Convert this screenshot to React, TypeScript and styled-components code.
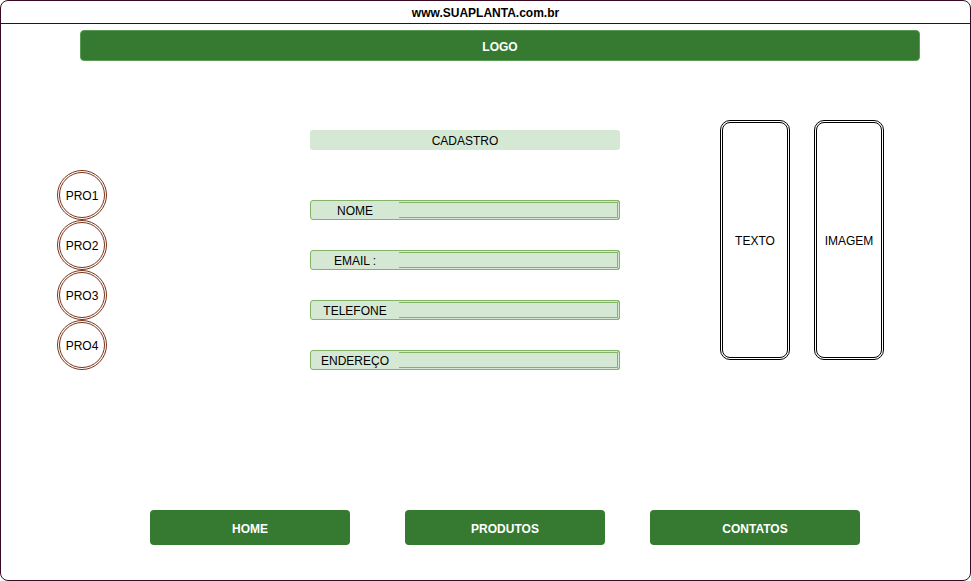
import { createGlobalStyle, styled } from 'styled-components';

const GlobalStyle = createGlobalStyle`
  html, body {
    margin: 0;
    padding: 0;
    background: #ffffff;
  }
  * {
    box-sizing: border-box;
  }
`;

const fields = ['NOME', 'EMAIL :', 'TELEFONE', 'ENDEREÇO'];
const products = ['PRO1', 'PRO2', 'PRO3', 'PRO4'];

export default function App() {
  return (
    <>
      <GlobalStyle />
      <Frame>
        <TitleBar>www.SUAPLANTA.com.br</TitleBar>
        <LogoBar>LOGO</LogoBar>
        <Middle>
          <ProductColumn>
            {products.map((p) => (
              <ProductCircle key={p}>{p}</ProductCircle>
            ))}
          </ProductColumn>
          <FormColumn>
            <FormTitle>CADASTRO</FormTitle>
            <Fields>
              {fields.map((f) => (
                <Field key={f}>
                  <FieldLabel>{f}</FieldLabel>
                  <FieldInput />
                </Field>
              ))}
            </Fields>
          </FormColumn>
          <PanelColumn>
            <Panel>TEXTO</Panel>
            <Panel>IMAGEM</Panel>
          </PanelColumn>
        </Middle>
        <Nav>
          <NavButton $offset={149} $width={200}>HOME</NavButton>
          <NavButton $offset={55} $width={200}>PRODUTOS</NavButton>
          <NavButton $offset={45} $width={210}>CONTATOS</NavButton>
        </Nav>
      </Frame>
    </>
  );
}

const Frame = styled.div`
  width: 971px;
  height: 581px;
  border: 1px solid #3a0a24;
  border-radius: 8px;
  display: flex;
  flex-direction: column;
  font-family: 'Liberation Sans', Arial, sans-serif;
  font-size: 12px;
  color: #000000;
  overflow: hidden;
`;

const TitleBar = styled.div`
  height: 23px;
  border-bottom: 1px solid #3a0a24;
  display: flex;
  align-items: center;
  justify-content: center;
  font-weight: bold;
  font-size: 12px;
  padding-top: 1px;
`;

const LogoBar = styled.div`
  margin: 6px 50px 0 79px;
  height: 31px;
  background: #367a32;
  border: 1px solid #5a9a55;
  border-radius: 4px;
  color: #ffffff;
  font-weight: bold;
  display: flex;
  align-items: center;
  justify-content: center;
  padding-top: 2px;
`;

const Middle = styled.div`
  display: flex;
  align-items: flex-start;
  margin-top: 59px;
`;

const ProductColumn = styled.div`
  display: flex;
  flex-direction: column;
  margin-left: 56px;
  padding-top: 50px;
`;

const ProductCircle = styled.div`
  width: 50px;
  height: 50px;
  border-radius: 50%;
  border: 3px double #7a3318;
  display: flex;
  align-items: center;
  justify-content: center;
  font-size: 12px;
  padding-top: 1px;
`;

const FormColumn = styled.div`
  width: 310px;
  margin-left: 203px;
  padding-top: 10px;
  display: flex;
  flex-direction: column;
`;

const FormTitle = styled.div`
  height: 20px;
  background: #d5e8d4;
  border-radius: 3px;
  display: flex;
  align-items: center;
  justify-content: center;
  padding-top: 2px;
`;

const Fields = styled.div`
  margin-top: 50px;
  display: flex;
  flex-direction: column;
  gap: 30px;
`;

const Field = styled.div`
  height: 20px;
  display: flex;
  background: #d5e8d4;
  border: 1px solid #82b366;
  border-radius: 3px;
`;

const FieldLabel = styled.div`
  width: 88px;
  display: flex;
  align-items: center;
  justify-content: center;
  padding-top: 1px;
`;

const FieldInput = styled.div`
  flex: 1;
  margin: -1px -1px -1px 0;
  border: 3px double #82b366;
  border-left: none;
  border-radius: 0 3px 3px 0;
`;

const PanelColumn = styled.div`
  display: flex;
  gap: 24px;
  margin-left: 100px;
`;

const Panel = styled.div`
  width: 70px;
  height: 240px;
  border: 3px double #000000;
  border-radius: 10px;
  display: flex;
  align-items: center;
  justify-content: center;
  padding-top: 2px;
`;

const Nav = styled.div`
  margin-top: auto;
  margin-bottom: 35px;
  display: flex;
`;

const NavButton = styled.div<{ $offset: number; $width: number }>`
  margin-left: ${({ $offset }) => $offset}px;
  width: ${({ $width }) => $width}px;
  height: 35px;
  background: #367a32;
  border-radius: 4px;
  color: #ffffff;
  font-weight: bold;
  font-size: 12px;
  display: flex;
  align-items: center;
  justify-content: center;
  padding-top: 2px;
`;
